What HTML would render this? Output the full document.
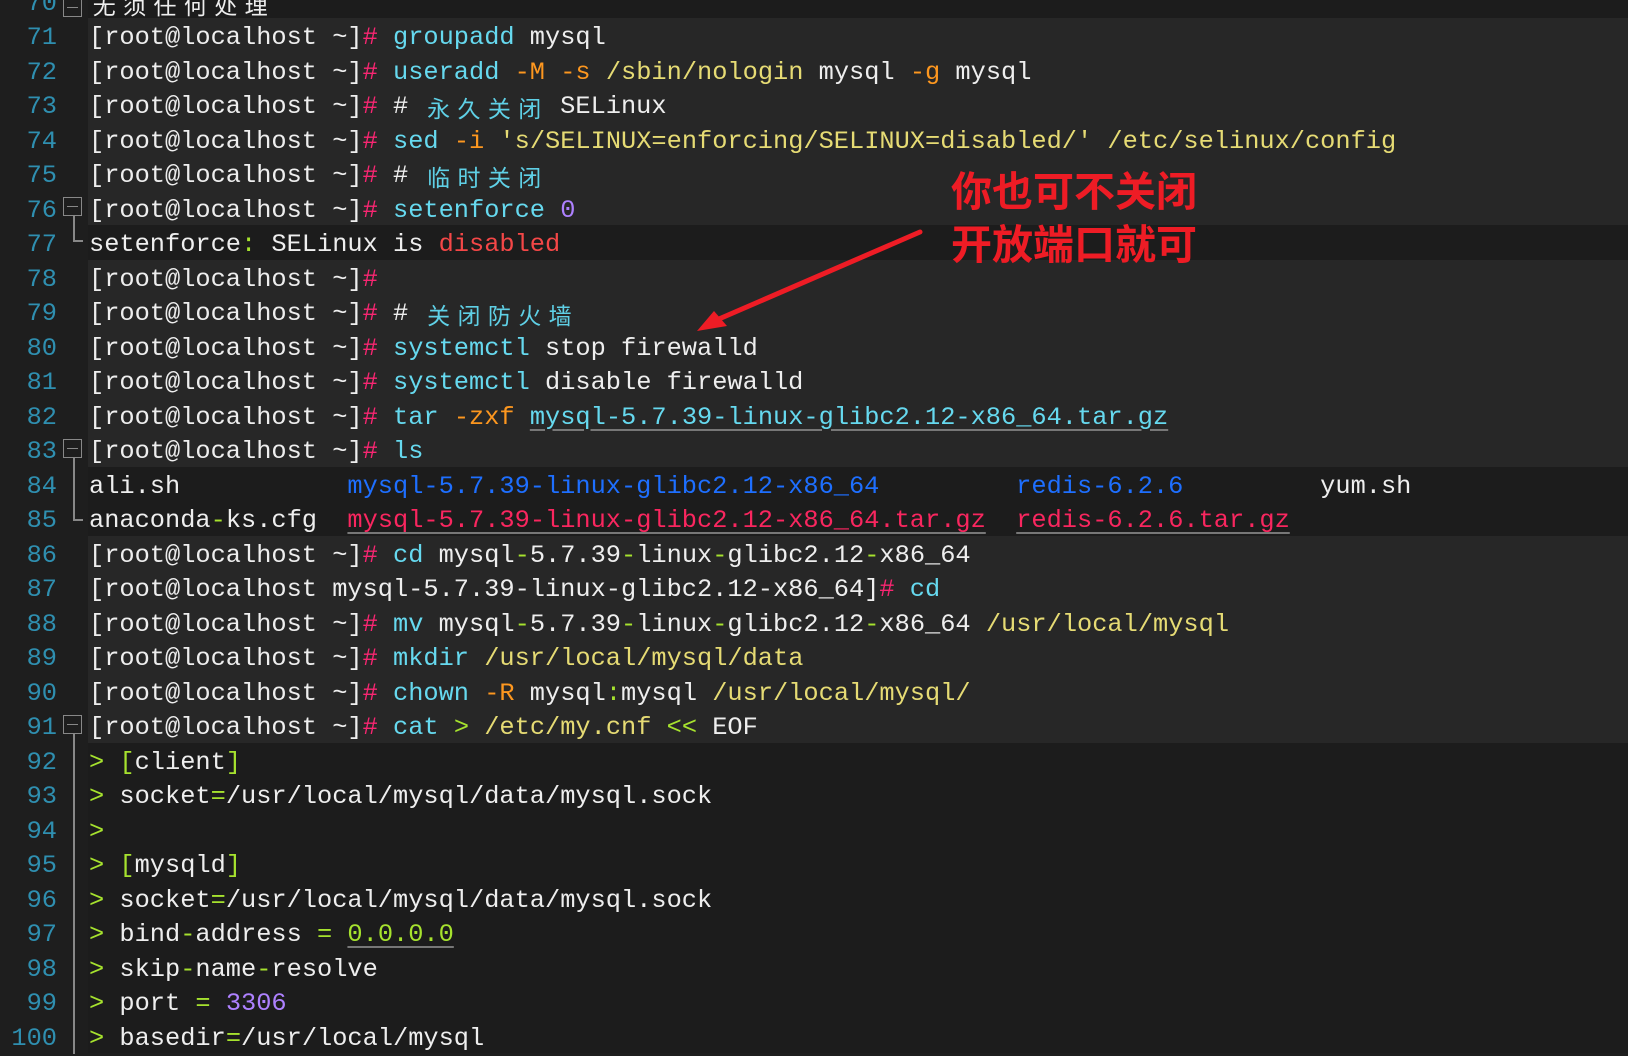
<!DOCTYPE html>
<html><head><meta charset="utf-8"><style>
html,body{margin:0;padding:0;background:#1e1e1e;width:1628px;height:1049px;overflow:hidden}
.row{position:absolute;left:0;width:1628px;height:34.5px;}
.bg{position:absolute;left:88px;right:0;top:-3px;bottom:3px;background:#272727}
.dk .bg{background:#1c1c1c}
.n{position:absolute;left:0;width:57px;text-align:right;color:#2f8fb0;font:25.33px/34.5px "Liberation Mono",monospace;top:0}
.t{position:absolute;left:89px;top:0;height:34.5px;white-space:pre;color:#eeeeee;font:25.33px/34.5px "Liberation Mono","Noto Sans CJK SC",monospace}
.c{display:inline-block;width:30.4px;height:34.5px;line-height:34.5px;vertical-align:top;text-align:center;font-family:"Noto Sans CJK SC",sans-serif;font-size:23px;overflow:hidden}
.p{color:#f92672}.k{color:#66d9ef}.o{color:#fd971f}.y{color:#e6db74}.m{color:#ae81ff}.r{color:#f44747}
.b{color:#1e6fff}.g{color:#a6e22e}.u{text-decoration:underline;text-decoration-color:#777;text-underline-offset:5px;text-decoration-thickness:2px}
.pk{color:#f9265f}.cm{color:#5fd0e6}
.fold{position:absolute;left:63px;width:19px;height:19px;border:1.5px solid #888;box-sizing:border-box}
.fold:after{content:"";position:absolute;left:3px;right:3px;top:7.5px;height:1.5px;background:#888}
.vl{position:absolute;left:73px;width:2px;background:#888}
.hl{position:absolute;left:73px;width:10px;height:2px;background:#888}
.ann{position:absolute;left:951px;color:#ee1c25;font:bold 41px/1 "Noto Sans CJK SC","WenQuanYi Zen Hei",sans-serif;white-space:nowrap}
</style></head><body>
<div class="row dk" style="top:-13.5px"><div class="bg"></div><div class="n">70</div><div class="t"><span class="c">无</span><span class="c">须</span><span class="c">任</span><span class="c">何</span><span class="c">处</span><span class="c">理</span></div></div>
<div class="row" style="top:21px"><div class="bg"></div><div class="n">71</div><div class="t">[root@localhost ~]<span class="p">#</span> <span class="k">groupadd</span> mysql</div></div>
<div class="row" style="top:55.5px"><div class="bg"></div><div class="n">72</div><div class="t">[root@localhost ~]<span class="p">#</span> <span class="k">useradd</span> <span class="o">-M</span> <span class="o">-s</span> <span class="y">/sbin/nologin</span> mysql <span class="o">-g</span> mysql</div></div>
<div class="row" style="top:90px"><div class="bg"></div><div class="n">73</div><div class="t">[root@localhost ~]<span class="p">#</span> # <span class="cm"><span class="c">永</span><span class="c">久</span><span class="c">关</span><span class="c">闭</span></span> SELinux</div></div>
<div class="row" style="top:124.5px"><div class="bg"></div><div class="n">74</div><div class="t">[root@localhost ~]<span class="p">#</span> <span class="k">sed</span> <span class="o">-i</span> <span class="y">'s/SELINUX=enforcing/SELINUX=disabled/' /etc/selinux/config</span></div></div>
<div class="row" style="top:159px"><div class="bg"></div><div class="n">75</div><div class="t">[root@localhost ~]<span class="p">#</span> # <span class="cm"><span class="c">临</span><span class="c">时</span><span class="c">关</span><span class="c">闭</span></span></div></div>
<div class="row" style="top:193.5px"><div class="bg"></div><div class="n">76</div><div class="t">[root@localhost ~]<span class="p">#</span> <span class="k">setenforce</span> <span class="m">0</span></div></div>
<div class="row dk" style="top:228px"><div class="bg"></div><div class="n">77</div><div class="t">setenforce<span class="g">:</span> SELinux is <span class="r">disabled</span></div></div>
<div class="row" style="top:262.5px"><div class="bg"></div><div class="n">78</div><div class="t">[root@localhost ~]<span class="p">#</span></div></div>
<div class="row" style="top:297px"><div class="bg"></div><div class="n">79</div><div class="t">[root@localhost ~]<span class="p">#</span> # <span class="cm"><span class="c">关</span><span class="c">闭</span><span class="c">防</span><span class="c">火</span><span class="c">墙</span></span></div></div>
<div class="row" style="top:331.5px"><div class="bg"></div><div class="n">80</div><div class="t">[root@localhost ~]<span class="p">#</span> <span class="k">systemctl</span> stop firewalld</div></div>
<div class="row" style="top:366px"><div class="bg"></div><div class="n">81</div><div class="t">[root@localhost ~]<span class="p">#</span> <span class="k">systemctl</span> disable firewalld</div></div>
<div class="row" style="top:400.5px"><div class="bg"></div><div class="n">82</div><div class="t">[root@localhost ~]<span class="p">#</span> <span class="k">tar</span> <span class="o">-zxf</span> <span class="k u">mysql-5.7.39-linux-glibc2.12-x86_64.tar.gz</span></div></div>
<div class="row" style="top:435px"><div class="bg"></div><div class="n">83</div><div class="t">[root@localhost ~]<span class="p">#</span> <span class="k">ls</span></div></div>
<div class="row dk" style="top:469.5px"><div class="bg"></div><div class="n">84</div><div class="t">ali.sh           <span class="b">mysql-5.7.39-linux-glibc2.12-x86_64</span>         <span class="b">redis-6.2.6</span>         yum.sh</div></div>
<div class="row dk" style="top:504px"><div class="bg"></div><div class="n">85</div><div class="t">anaconda<span class="g">-</span>ks.cfg  <span class="pk u">mysql-5.7.39-linux-glibc2.12-x86_64.tar.gz</span>  <span class="pk u">redis-6.2.6.tar.gz</span></div></div>
<div class="row" style="top:538.5px"><div class="bg"></div><div class="n">86</div><div class="t">[root@localhost ~]<span class="p">#</span> <span class="k">cd</span> mysql<span class="g">-</span>5.7.39<span class="g">-</span>linux<span class="g">-</span>glibc2.12<span class="g">-</span>x86_64</div></div>
<div class="row" style="top:573px"><div class="bg"></div><div class="n">87</div><div class="t">[root@localhost mysql-5.7.39-linux-glibc2.12-x86_64]<span class="p">#</span> <span class="k">cd</span></div></div>
<div class="row" style="top:607.5px"><div class="bg"></div><div class="n">88</div><div class="t">[root@localhost ~]<span class="p">#</span> <span class="k">mv</span> mysql<span class="g">-</span>5.7.39<span class="g">-</span>linux<span class="g">-</span>glibc2.12<span class="g">-</span>x86_64 <span class="y">/usr/local/mysql</span></div></div>
<div class="row" style="top:642px"><div class="bg"></div><div class="n">89</div><div class="t">[root@localhost ~]<span class="p">#</span> <span class="k">mkdir</span> <span class="y">/usr/local/mysql/data</span></div></div>
<div class="row" style="top:676.5px"><div class="bg"></div><div class="n">90</div><div class="t">[root@localhost ~]<span class="p">#</span> <span class="k">chown</span> <span class="o">-R</span> mysql<span class="g">:</span>mysql <span class="y">/usr/local/mysql/</span></div></div>
<div class="row" style="top:711px"><div class="bg"></div><div class="n">91</div><div class="t">[root@localhost ~]<span class="p">#</span> <span class="k">cat</span> <span class="g">&gt;</span> <span class="y">/etc/my.cnf</span> <span class="g">&lt;&lt;</span> EOF</div></div>
<div class="row dk" style="top:745.5px"><div class="bg"></div><div class="n">92</div><div class="t"><span class="g">&gt;</span> <span class="g">[</span>client<span class="g">]</span></div></div>
<div class="row dk" style="top:780px"><div class="bg"></div><div class="n">93</div><div class="t"><span class="g">&gt;</span> socket<span class="g">=</span>/usr/local/mysql/data/mysql.sock</div></div>
<div class="row dk" style="top:814.5px"><div class="bg"></div><div class="n">94</div><div class="t"><span class="g">&gt;</span></div></div>
<div class="row dk" style="top:849px"><div class="bg"></div><div class="n">95</div><div class="t"><span class="g">&gt;</span> <span class="g">[</span>mysqld<span class="g">]</span></div></div>
<div class="row dk" style="top:883.5px"><div class="bg"></div><div class="n">96</div><div class="t"><span class="g">&gt;</span> socket<span class="g">=</span>/usr/local/mysql/data/mysql.sock</div></div>
<div class="row dk" style="top:918px"><div class="bg"></div><div class="n">97</div><div class="t"><span class="g">&gt;</span> bind<span class="g">-</span>address <span class="g">=</span> <span class="g u">0.0.0.0</span></div></div>
<div class="row dk" style="top:952.5px"><div class="bg"></div><div class="n">98</div><div class="t"><span class="g">&gt;</span> skip<span class="g">-</span>name<span class="g">-</span>resolve</div></div>
<div class="row dk" style="top:987px"><div class="bg"></div><div class="n">99</div><div class="t"><span class="g">&gt;</span> port <span class="g">=</span> <span class="m">3306</span></div></div>
<div class="row dk" style="top:1021.5px"><div class="bg"></div><div class="n">100</div><div class="t"><span class="g">&gt;</span> basedir<span class="g">=</span>/usr/local/mysql</div></div>

<div class="fold" style="top:-2px"></div>
<div class="fold" style="top:197px"></div>
<div class="vl" style="top:216px;height:25px"></div><div class="hl" style="top:240px"></div>
<div class="fold" style="top:439px"></div>
<div class="vl" style="top:458px;height:62px"></div><div class="hl" style="top:519px"></div>
<div class="fold" style="top:715px"></div>
<div class="vl" style="top:734px;height:320px"></div>

<div class="ann" style="top:168px">你也可不关闭</div>
<div class="ann" style="top:221px">开放端口就可</div>
<svg style="position:absolute;left:0;top:0" width="1628" height="1049">
<line x1="920" y1="232" x2="712" y2="322" stroke="#ee1c25" stroke-width="5" stroke-linecap="round"/>
<polygon points="697,331 714,311 727,326" fill="#ee1c25"/>
</svg>
</body></html>
